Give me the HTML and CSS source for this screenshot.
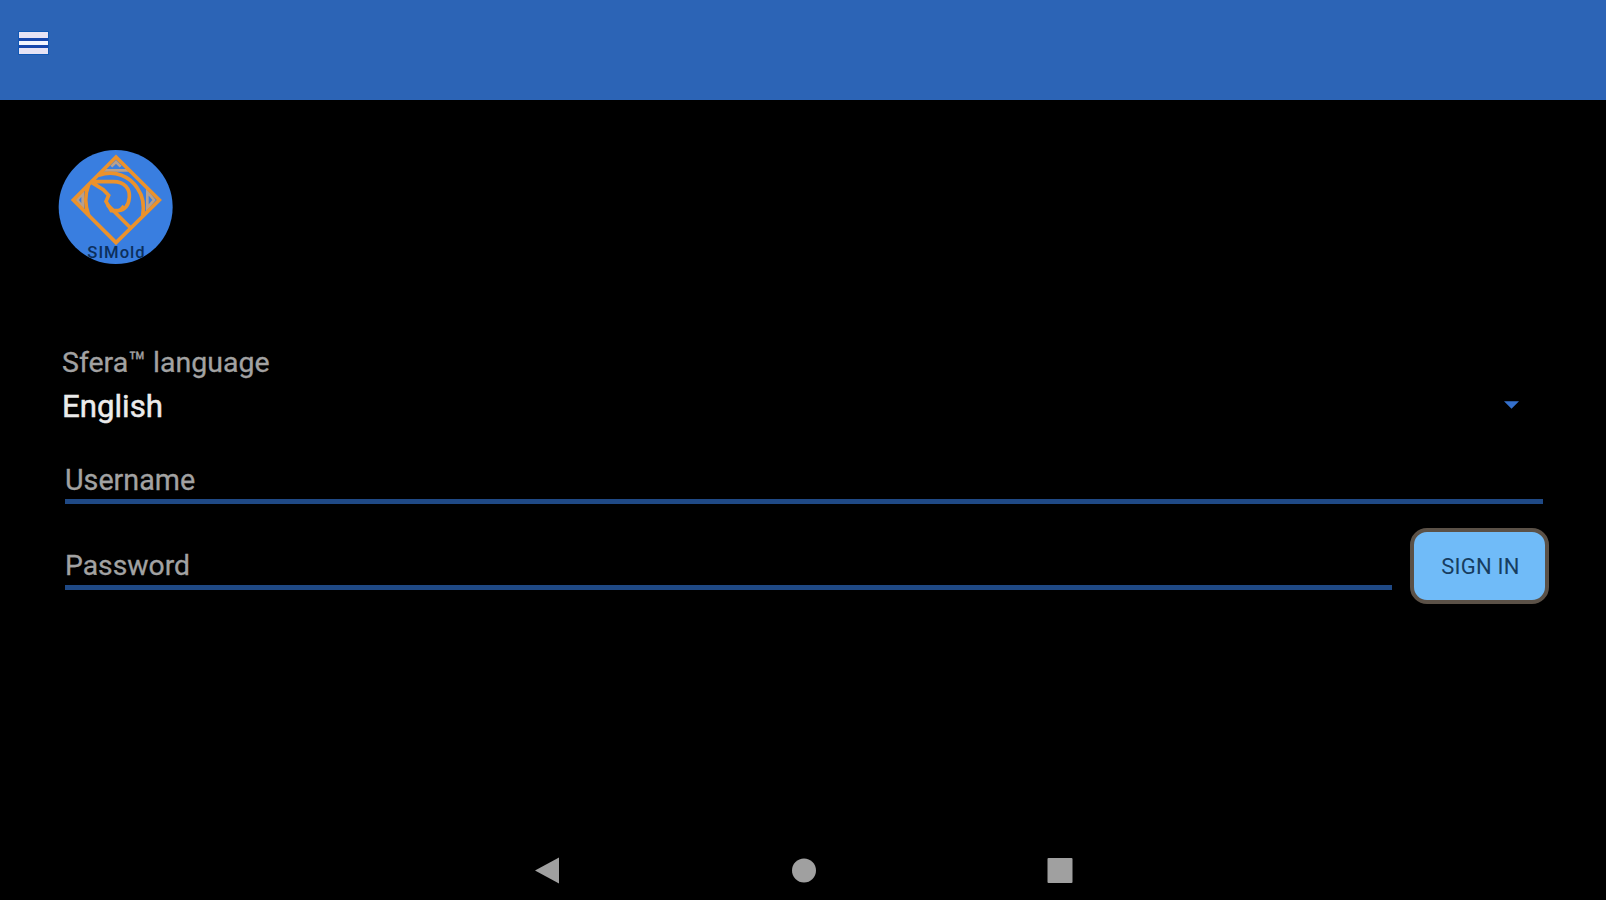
FILE: index.html
```html
<!DOCTYPE html>
<html lang="en">
<head>
<meta charset="utf-8">
<title>Sign in</title>
<meta name="viewport" content="width=device-width,initial-scale=1.0">
<link rel="stylesheet" href="styles.css">
</head>
<body>
<div class="top">
	<div class="menu"><span></span><span></span><span></span></div>
</div>
<form class="main">
	<svg class="logo" viewBox="24 27 348 348">
		<clipPath id="round"><circle cx="197" cy="201" r="171"/></clipPath>
		<circle cx="197" cy="201" r="171" fill="#397ee0"/>
		<g fill="none" stroke="#b9a08c" stroke-width="8">
			<path d="M156 91H240M184 80L198 66L212 80"/>
			<path d="M98 158V202L82 180Z"/>
			<path d="M292 156V204L312 180Z"/>
		</g>
		<g fill="none" stroke="#ec922b" stroke-width="11">
			<path d="M198 51L328 180L198 308L70 180Z"/>
			<path d="M116 134C106 160 104 195 116 226"/>
			<path d="M146 106C195 88 240 110 262 144C280 170 284 195 278 228"/>
			<path d="M122 125H190C224 125 240 146 238 172C236 196 224 210 204 212H184L168 184L176 166L160 149L126 128"/>
			<path d="M172 194L242 264M210 212L222 198"/>
		</g>
		<text x="112" y="354" textLength="172" clip-path="url(#round)">SIMold</text>
	</svg>
	<div class="label">Sfera™ language</div>
	<div class="lang">
		<span>English</span>
		<svg class="arrow" viewBox="0 0 16 8"><path d="M0 0H16L8 8Z" fill="#3470cc"/></svg>
	</div>
	<input class="field user" type="text" placeholder="Username">
	<div class="row">
		<input class="field pass" type="password" placeholder="Password">
		<button class="sign" type="button">SIGN IN</button>
	</div>
</form>
<div class="nav">
	<svg viewBox="0 0 28 28"><path d="M1 13.500L25 .5V26.500Z"/></svg>
	<svg viewBox="0 0 28 28"><circle cx="14" cy="13.500" r="12"/></svg>
	<svg viewBox="0 0 28 28"><rect x="1.500" y="1" width="25" height="25" rx="1"/></svg>
</div>
</body>
</html>
```
FILE: styles.css
```css
* { margin:0; padding:0; box-sizing:border-box; }
body { height:900px; display:flex; flex-direction:column; background:#000; color:#fff; font-family:Roboto, "Liberation Sans", sans-serif; overflow:hidden; }
.top { height:100px; padding:32px 0 0 19px; background:#2c64b6; }
.menu { width:29px; height:22px; display:flex; flex-direction:column; justify-content:space-between; background:#1747ad; outline:1px solid #1158b4; }
.menu span { height:6px; background:#e6e3f5; }
.menu span:nth-child(2) { height:4px; background:#f2f5ff; }
.main { flex:1; display:flex; flex-direction:column; padding:49px 57px 0 62px; }
.logo { width:116px; height:116px; margin-left:-4px; }
.logo text { font-size:50px; font-weight:500; fill:#0c2f5c; }
.label { height:34px; line-height:34px; margin-top:81px; font-size:28.500px; color:#a2a2a2; -webkit-text-stroke:.3px #a2a2a2; }
.lang { height:40px; margin-top:7px; display:flex; align-items:center; justify-content:space-between; padding-right:30px; font-size:31.200px; line-height:40px; color:#ececec; -webkit-text-stroke:.5px #ececec; }
.arrow { width:15px; height:8px; margin-bottom:4px; }
.field { height:44px; border:0; border-bottom:5px solid #1f4985; background:none; outline:0; color:#ececec; font:28.700px/39px Roboto, "Liberation Sans", sans-serif; }
.field::placeholder { color:#a2a2a2; opacity:1; -webkit-text-stroke:.3px #a2a2a2; }
.user { height:43px; margin:34px 6px 0 3px; }
.row { display:flex; margin-top:24px; }
.pass { flex:1; margin:18px 18px 0 3px; font-size:28.300px; }
.sign { width:139px; height:76px; padding:1px 0 0 2px; border:4px solid #5b5147; border-radius:17px; background:#70bbf8; color:#173d60; font:22px/67px Roboto, "Liberation Sans", sans-serif; letter-spacing:.2px; }
.nav { height:60px; display:flex; justify-content:center; gap:228px; padding:17px 0 0 2px; }
.nav svg { width:28px; height:28px; fill:#a0a0a0; }
```
